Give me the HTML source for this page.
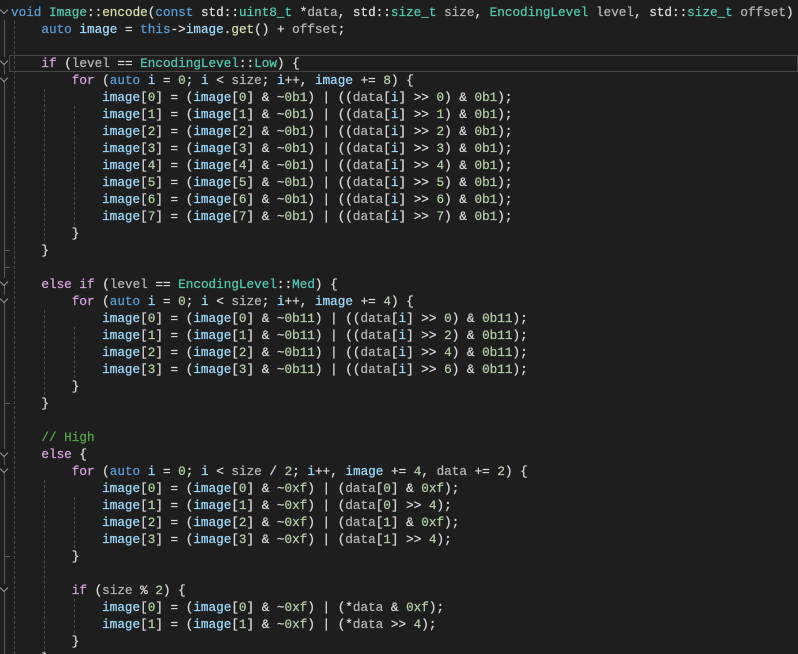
<!DOCTYPE html>
<html><head><meta charset="utf-8"><style>
html,body{margin:0;padding:0;background:#1e1e1e;width:798px;height:654px;overflow:hidden;position:relative}
pre{position:absolute;left:11px;top:4px;margin:0;font-family:"Liberation Mono",monospace;font-size:12.67px;line-height:17px;color:#dadada;white-space:pre;-webkit-text-stroke:0.25px currentColor}
.k{color:#569cd6}.c{color:#d8a0df}.v{color:#9cdcfe}.t{color:#4ec9b0}.f{color:#dcdcaa}.n{color:#b5cea8}.p{color:#b4b4b4}.m{color:#57a64a}.e{color:#4ec9b0}
.g{position:absolute;width:0;border-left:1px dashed #4a4a4a}
.hl{position:absolute;left:9px;right:0;top:55px;height:15px;border:1px solid #464646}
.mg{position:absolute;left:4px;top:20px;width:1px;height:640px;background:#5a5a5a}
.tk{position:absolute;left:4px;width:6px;height:1px;background:#5a5a5a}
.ch{position:absolute;left:1px;width:5px;height:5px;border-right:1px solid #999;border-bottom:1px solid #999;transform:rotate(45deg);background:#1e1e1e}
</style></head><body>
<div class="hl"></div>
<div class="mg"></div>
<div class="tk" style="top:250px"></div>
<div class="tk" style="top:267px"></div>
<div class="tk" style="top:403px"></div>
<div class="tk" style="top:556px"></div>
<div class="ch" style="top:7px"></div>
<div class="ch" style="top:58px"></div>
<div class="ch" style="top:75px"></div>
<div class="ch" style="top:279px"></div>
<div class="ch" style="top:296px"></div>
<div class="ch" style="top:450px"></div>
<div class="ch" style="top:466px"></div>
<div class="ch" style="top:585px"></div>
<div class="g" style="left:14px;top:21px;height:633px"></div>
<div class="g" style="left:44px;top:89px;height:152px"></div>
<div class="g" style="left:74px;top:106px;height:119px"></div>
<div class="g" style="left:44px;top:310px;height:85px"></div>
<div class="g" style="left:74px;top:327px;height:51px"></div>
<div class="g" style="left:44px;top:480px;height:174px"></div>
<div class="g" style="left:74px;top:497px;height:51px"></div>
<div class="g" style="left:74px;top:599px;height:34px"></div>
<pre><span class="k">void</span> <span class="t">Image</span>::<span class="f">encode</span>(<span class="k">const</span> std::<span class="t">uint8_t</span> *<span class="p">data</span>, std::<span class="t">size_t</span> <span class="p">size</span>, <span class="t">EncodingLevel</span> <span class="p">level</span>, std::<span class="t">size_t</span> <span class="p">offset</span>)
    <span class="k">auto</span> <span class="v">image</span> = <span class="k">this</span>-&gt;<span class="v">image</span>.<span class="f">get</span>() + <span class="p">offset</span>;

    <span class="c">if</span> (<span class="p">level</span> == <span class="t">EncodingLevel</span>::<span class="e">Low</span>) {
        <span class="c">for</span> (<span class="k">auto</span> <span class="v">i</span> = <span class="n">0</span>; <span class="v">i</span> &lt; <span class="p">size</span>; <span class="v">i</span>++, <span class="v">image</span> += <span class="n">8</span>) {
            <span class="v">image</span>[<span class="n">0</span>] = (<span class="v">image</span>[<span class="n">0</span>] &amp; ~<span class="n">0b1</span>) | ((<span class="p">data</span>[<span class="v">i</span>] &gt;&gt; <span class="n">0</span>) &amp; <span class="n">0b1</span>);
            <span class="v">image</span>[<span class="n">1</span>] = (<span class="v">image</span>[<span class="n">1</span>] &amp; ~<span class="n">0b1</span>) | ((<span class="p">data</span>[<span class="v">i</span>] &gt;&gt; <span class="n">1</span>) &amp; <span class="n">0b1</span>);
            <span class="v">image</span>[<span class="n">2</span>] = (<span class="v">image</span>[<span class="n">2</span>] &amp; ~<span class="n">0b1</span>) | ((<span class="p">data</span>[<span class="v">i</span>] &gt;&gt; <span class="n">2</span>) &amp; <span class="n">0b1</span>);
            <span class="v">image</span>[<span class="n">3</span>] = (<span class="v">image</span>[<span class="n">3</span>] &amp; ~<span class="n">0b1</span>) | ((<span class="p">data</span>[<span class="v">i</span>] &gt;&gt; <span class="n">3</span>) &amp; <span class="n">0b1</span>);
            <span class="v">image</span>[<span class="n">4</span>] = (<span class="v">image</span>[<span class="n">4</span>] &amp; ~<span class="n">0b1</span>) | ((<span class="p">data</span>[<span class="v">i</span>] &gt;&gt; <span class="n">4</span>) &amp; <span class="n">0b1</span>);
            <span class="v">image</span>[<span class="n">5</span>] = (<span class="v">image</span>[<span class="n">5</span>] &amp; ~<span class="n">0b1</span>) | ((<span class="p">data</span>[<span class="v">i</span>] &gt;&gt; <span class="n">5</span>) &amp; <span class="n">0b1</span>);
            <span class="v">image</span>[<span class="n">6</span>] = (<span class="v">image</span>[<span class="n">6</span>] &amp; ~<span class="n">0b1</span>) | ((<span class="p">data</span>[<span class="v">i</span>] &gt;&gt; <span class="n">6</span>) &amp; <span class="n">0b1</span>);
            <span class="v">image</span>[<span class="n">7</span>] = (<span class="v">image</span>[<span class="n">7</span>] &amp; ~<span class="n">0b1</span>) | ((<span class="p">data</span>[<span class="v">i</span>] &gt;&gt; <span class="n">7</span>) &amp; <span class="n">0b1</span>);
        }
    }

    <span class="c">else</span> <span class="c">if</span> (<span class="p">level</span> == <span class="t">EncodingLevel</span>::<span class="e">Med</span>) {
        <span class="c">for</span> (<span class="k">auto</span> <span class="v">i</span> = <span class="n">0</span>; <span class="v">i</span> &lt; <span class="p">size</span>; <span class="v">i</span>++, <span class="v">image</span> += <span class="n">4</span>) {
            <span class="v">image</span>[<span class="n">0</span>] = (<span class="v">image</span>[<span class="n">0</span>] &amp; ~<span class="n">0b11</span>) | ((<span class="p">data</span>[<span class="v">i</span>] &gt;&gt; <span class="n">0</span>) &amp; <span class="n">0b11</span>);
            <span class="v">image</span>[<span class="n">1</span>] = (<span class="v">image</span>[<span class="n">1</span>] &amp; ~<span class="n">0b11</span>) | ((<span class="p">data</span>[<span class="v">i</span>] &gt;&gt; <span class="n">2</span>) &amp; <span class="n">0b11</span>);
            <span class="v">image</span>[<span class="n">2</span>] = (<span class="v">image</span>[<span class="n">2</span>] &amp; ~<span class="n">0b11</span>) | ((<span class="p">data</span>[<span class="v">i</span>] &gt;&gt; <span class="n">4</span>) &amp; <span class="n">0b11</span>);
            <span class="v">image</span>[<span class="n">3</span>] = (<span class="v">image</span>[<span class="n">3</span>] &amp; ~<span class="n">0b11</span>) | ((<span class="p">data</span>[<span class="v">i</span>] &gt;&gt; <span class="n">6</span>) &amp; <span class="n">0b11</span>);
        }
    }

    <span class="m">// High</span>
    <span class="c">else</span> {
        <span class="c">for</span> (<span class="k">auto</span> <span class="v">i</span> = <span class="n">0</span>; <span class="v">i</span> &lt; <span class="p">size</span> / <span class="n">2</span>; <span class="v">i</span>++, <span class="v">image</span> += <span class="n">4</span>, <span class="p">data</span> += <span class="n">2</span>) {
            <span class="v">image</span>[<span class="n">0</span>] = (<span class="v">image</span>[<span class="n">0</span>] &amp; ~<span class="n">0xf</span>) | (<span class="p">data</span>[<span class="n">0</span>] &amp; <span class="n">0xf</span>);
            <span class="v">image</span>[<span class="n">1</span>] = (<span class="v">image</span>[<span class="n">1</span>] &amp; ~<span class="n">0xf</span>) | (<span class="p">data</span>[<span class="n">0</span>] &gt;&gt; <span class="n">4</span>);
            <span class="v">image</span>[<span class="n">2</span>] = (<span class="v">image</span>[<span class="n">2</span>] &amp; ~<span class="n">0xf</span>) | (<span class="p">data</span>[<span class="n">1</span>] &amp; <span class="n">0xf</span>);
            <span class="v">image</span>[<span class="n">3</span>] = (<span class="v">image</span>[<span class="n">3</span>] &amp; ~<span class="n">0xf</span>) | (<span class="p">data</span>[<span class="n">1</span>] &gt;&gt; <span class="n">4</span>);
        }

        <span class="c">if</span> (<span class="p">size</span> % <span class="n">2</span>) {
            <span class="v">image</span>[<span class="n">0</span>] = (<span class="v">image</span>[<span class="n">0</span>] &amp; ~<span class="n">0xf</span>) | (*<span class="p">data</span> &amp; <span class="n">0xf</span>);
            <span class="v">image</span>[<span class="n">1</span>] = (<span class="v">image</span>[<span class="n">1</span>] &amp; ~<span class="n">0xf</span>) | (*<span class="p">data</span> &gt;&gt; <span class="n">4</span>);
        }
    }
</pre>
</body></html>
